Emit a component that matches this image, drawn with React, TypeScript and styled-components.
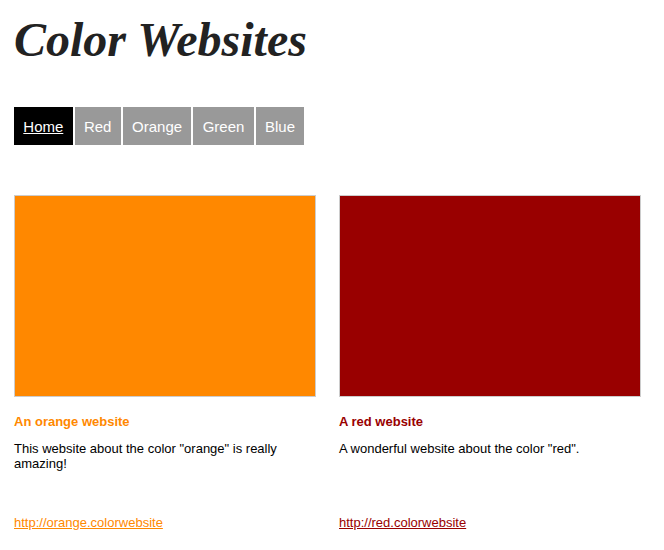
import styled, { createGlobalStyle } from "styled-components";

const GlobalStyle = createGlobalStyle`
  body {
    margin: 0;
    background: #fff;
    font-family: "Liberation Sans", Arial, sans-serif;
  }
`;

const sites = [
  {
    name: "An orange website",
    text: 'This website about the color "orange" is really amazing!',
    url: "http://orange.colorwebsite",
    color: "#ff8800",
  },
  {
    name: "A red website",
    text: 'A wonderful website about the color "red".',
    url: "http://red.colorwebsite",
    color: "#990000",
  },
];

const navItems = ["Home", "Red", "Orange", "Green", "Blue"];

export default function App() {
  return (
    <>
      <GlobalStyle />
      <Page>
        <Title>Color Websites</Title>
        <Nav>
          {navItems.map((item, i) => (
            <NavItem key={item} $active={i === 0} href="#">
              {item}
            </NavItem>
          ))}
        </Nav>
        <Cards>
          {sites.map((site) => (
            <Card key={site.name}>
              <Swatch $color={site.color} />
              <CardBody>
                <CardTitle $color={site.color}>{site.name}</CardTitle>
                <CardText>{site.text}</CardText>
                <CardLink $color={site.color} href="#">
                  {site.url}
                </CardLink>
              </CardBody>
            </Card>
          ))}
        </Cards>
      </Page>
    </>
  );
}

const Page = styled.div`
  padding: 0 14px;
`;

const Title = styled.h1`
  margin: 12px 0 0;
  font-family: "Liberation Serif", "Times New Roman", serif;
  font-size: 48px;
  font-style: italic;
  font-weight: bold;
  line-height: normal;
  color: #222;
`;

const Nav = styled.nav`
  display: flex;
  gap: 2px;
  margin-top: 40px;
`;

const NavItem = styled.a<{ $active: boolean }>`
  display: flex;
  align-items: center;
  height: 38px;
  padding: 0 9.3px;
  font-size: 15px;
  color: #fff;
  background: ${(p) => (p.$active ? "#000" : "#999")};
  text-decoration: ${(p) => (p.$active ? "underline" : "none")};
`;

const Cards = styled.div`
  display: grid;
  grid-template-columns: 302px 302px;
  column-gap: 23px;
  margin-top: 50px;
`;

const Card = styled.div`
  display: flex;
  flex-direction: column;
`;

const Swatch = styled.div<{ $color: string }>`
  height: 200px;
  background: ${(p) => p.$color};
  border: 1px solid #ccc;
`;

const CardBody = styled.div`
  display: flex;
  flex-direction: column;
  align-items: flex-start;
  height: 116px;
  margin-top: 17px;
  font-size: 13px;
  line-height: normal;
`;

const CardTitle = styled.h3<{ $color: string }>`
  margin: 0;
  font-size: 13px;
  font-weight: bold;
  color: ${(p) => p.$color};
`;

const CardText = styled.p`
  margin: 12px 0 0;
  color: #000;
`;

const CardLink = styled.a<{ $color: string }>`
  margin-top: auto;
  color: ${(p) => p.$color};
  text-decoration: underline;
`;
